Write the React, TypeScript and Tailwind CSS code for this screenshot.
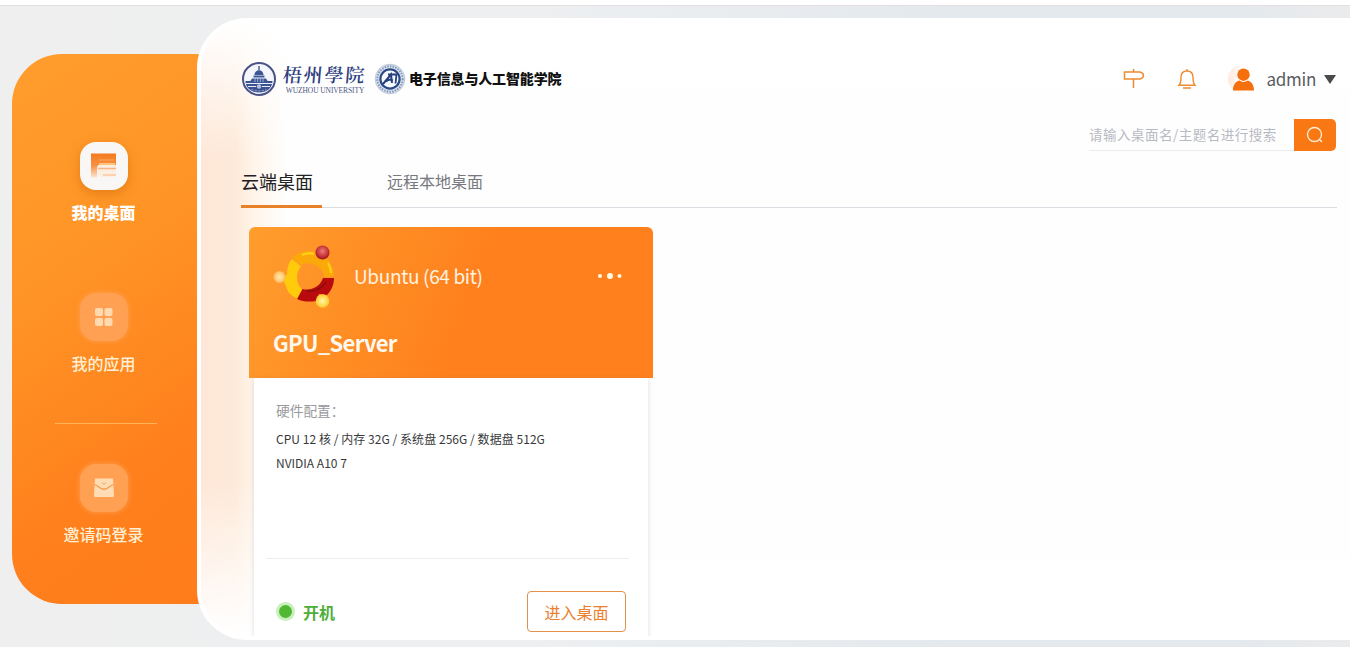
import { ReactNode } from 'react';

interface NavItemProps {
  label: string;
  icon: ReactNode;
  active?: boolean;
}

function NavItem({ label, icon, active = false }: NavItemProps) {
  return (
    <div className="flex flex-col items-center">
      <div
        className={`flex h-12 w-12 items-center justify-center rounded-2xl ${
          active
            ? 'bg-[#f8f7f6] shadow-[0_4px_12px_rgba(190,90,0,0.4)]'
            : 'bg-[#ffa052] shadow-[0_0_4px_1px_rgba(255,160,82,0.7)]'
        }`}
      >
        {icon}
      </div>
      <span
        className={`mt-2.5 mb-0.5 pr-px text-[16px] leading-6 ${
          active ? 'font-black text-white' : 'font-medium text-[#fff0d4]'
        }`}
      >
        {label}
      </span>
    </div>
  );
}

function DesktopIcon() {
  return (
    <svg className="ml-0.5" width="30" height="30" viewBox="0 0 30 30">
      <defs>
        <linearGradient id="desk" x1="0" y1="0" x2="0" y2="1">
          <stop offset="0" stopColor="#f47a1c" />
          <stop offset="0.5" stopColor="#f79044" />
          <stop offset="1" stopColor="#fde3d0" />
        </linearGradient>
      </defs>
      <path d="M1 2.500h25v13H7v11H1z" fill="url(#desk)" />
      <path d="M8 14h18v9c0 2-1 3-3 3H10l-3-4z" fill="#fdeee2" />
      <path d="M9 9h15" stroke="#f9a562" strokeWidth="1" />
      <path d="M9 13h16" stroke="#ffc47e" strokeWidth="2" />
      <path d="M8 17.500h18" stroke="#f9b482" strokeWidth="1.500" />
      <path d="M13 24h13" stroke="#fbc9a4" strokeWidth="1.500" />
    </svg>
  );
}

function AppsIcon() {
  return (
    <svg width="20" height="20" viewBox="0 0 20 20" fill="#ffd9b0">
      <rect x="1" y="1" width="8" height="8" rx="2" />
      <rect x="10.500" y="1" width="8" height="8" rx="2" />
      <rect x="1" y="11" width="8" height="8" rx="2" />
      <rect x="10.500" y="11" width="8" height="8" rx="2" />
    </svg>
  );
}

function InviteIcon() {
  return (
    <svg width="30" height="22" viewBox="0 0 30 22">
      <path d="M6 1.500h18l1 18.500H5z" fill="#ffddb4" />
      <path d="M6 7.500l7 4.500h4l7-4.500" fill="none" stroke="#f2a052" strokeWidth="1.300" />
      <path d="M13 5.500l2 2 2-2" fill="none" stroke="#f2a052" />
      <path d="M3 12l-3 4 3 4M27 12l3 4-3 4" fill="none" stroke="#f59a4c" />
    </svg>
  );
}

function UniversitySeal() {
  return (
    <svg width="36" height="36" viewBox="0 0 36 36">
      <circle cx="18" cy="18" r="16" fill="#f4f6fb" stroke="#4a5288" strokeWidth="2" />
      <path d="M4.500 20h27c0 7-6 11.500-13.500 11.500S4.500 27 4.500 20z" fill="#3c518f" />
      <path d="M17.300 5h1.400v4h-1.400zM13.500 14c0-6.500 9-6.500 9 0zM12.500 14.500h11v2h-11zM8 22l3-4.500h14l3 4.500z" fill="#3d5796" />
      <path d="M14 17v4M16.700 17v4M19.300 17v4M22 17v4" stroke="#c4cfe6" strokeWidth="0.700" />
      <path d="M5 22.500h26M7 25.500h8M21 25.500h8" stroke="#e8edf7" strokeWidth="1.100" />
      <circle cx="18" cy="25.500" r="2.200" fill="#b5c2df" />
      <path d="M10.500 28.500q7.500 3 15 0" fill="none" stroke="#a5b1d3" strokeDasharray="2 1.500" />
    </svg>
  );
}

function CollegeSeal() {
  return (
    <svg width="32" height="32" viewBox="0 0 32 32">
      <circle cx="16" cy="16" r="14.800" fill="#dbe3ef" stroke="#b3bfd3" strokeWidth="0.800" />
      <circle cx="16" cy="16" r="12.700" fill="none" stroke="#8294b8" strokeWidth="2" strokeDasharray="1.500 1.200" />
      <circle cx="16" cy="16" r="9.600" fill="#f7fafd" stroke="#2a4a85" strokeWidth="2.200" />
      <path d="M9 21l8-9.500 1 8.500M12 18.500c2-2 5-2 7-1" fill="none" stroke="#263f7d" strokeWidth="2" />
      <path d="M14 11.500h8.500l-1 9" fill="none" stroke="#263f7d" strokeWidth="1.800" />
    </svg>
  );
}

function UbuntuLogo() {
  return (
    <svg width="64" height="64" viewBox="0 0 64 64">
      <defs>
        <radialGradient id="red" cx="0.5" cy="0.4" r="0.6">
          <stop offset="0" stopColor="#f07c7c" />
          <stop offset="0.5" stopColor="#cf4346" />
          <stop offset="1" stopColor="#a3121a" />
        </radialGradient>
        <radialGradient id="yellow">
          <stop offset="0" stopColor="#fff9a8" />
          <stop offset="1" stopColor="#ffc928" />
        </radialGradient>
        <radialGradient id="peach">
          <stop offset="0" stopColor="#ffe7ac" />
          <stop offset="0.6" stopColor="#ffd183" />
          <stop offset="1" stopColor="#ffb55b" />
        </radialGradient>
      </defs>
      <path d="M24.500 54C19 51 14 47 13 41L10 35l4-6C14 23 16 17 19 14l9 7.500A17 17 0 0 0 29.500 45z" fill="#ffcb0b" />
      <path d="M19 13c6-6 14-8 22-7l3 6 8-1c5 5 9 12 9 20l-9 1A17 17 0 0 0 28 20z" fill="#fba90a" />
      <path d="M29 10q6-3 12-1M55 18q3 5 3 10" fill="none" stroke="#ffd21c" strokeWidth="2" />
      <path d="M61 33c0 7-3 13-7 17l-8-1-3 7c-6 1-13 1-19-2l5.500-10A17 17 0 0 0 50 33z" fill="#b90b0d" />
      <path d="M33 46q12 2 20-9" fill="none" stroke="#8f0c0c" strokeWidth="1.500" />
      <circle cx="49.500" cy="7.500" r="7" fill="url(#red)" />
      <circle cx="49.500" cy="56" r="6.800" fill="url(#yellow)" />
      <circle cx="6.500" cy="32" r="6" fill="url(#peach)" />
    </svg>
  );
}

function Header() {
  return (
    <header className="flex h-9 items-center justify-between">
      <div className="flex items-center">
        <UniversitySeal />
        <div className="ml-[6px] flex w-[84px] flex-col items-center">
          <span className="skew-x-[-5deg] font-['Noto_Serif_CJK_SC','Noto_Sans_CJK_TC',serif] text-[19px] leading-[22px] font-semibold tracking-[1.800px] whitespace-nowrap text-[#303f7e]">
            梧州學院
          </span>
          <span className="mt-px font-['Liberation_Serif',serif] text-[7.500px] leading-[9px] tracking-[-0.1px] whitespace-nowrap text-[#4d5681]">
            WUZHOU UNIVERSITY
          </span>
        </div>
        <div className="ml-[7px]">
          <CollegeSeal />
        </div>
        <span className="ml-[3px] pb-0.5 text-[14px] leading-5 font-black tracking-[-0.150px] text-[#111]">
          电子信息与人工智能学院
        </span>
      </div>
      <div className="flex items-center">
        <svg width="22" height="22" viewBox="0 0 22 22" fill="none" stroke="#ee8a32" strokeWidth="1.500">
          <path d="M1.500 4h15.500q3.500 1 3.500 3.500T17 11H1.500zM10.500 1v3M10.500 11v9" />
        </svg>
        <svg className="ml-[32px]" width="20" height="22" viewBox="0 0 20 22" fill="none" stroke="#ee8a32" strokeWidth="1.400">
          <path d="M2 17.300c1.500-1.500 2-3 2-8C4 5 6.500 3 10 3s6 2 6 6.300c0 5 .500 6.500 2 8zM10 1v2M6 20h8" />
        </svg>
        <div className="ml-[31px] flex h-7 w-7 items-center justify-center rounded-full bg-[linear-gradient(90deg,#ffe9dd,#fff_60%)]">
          <svg className="ml-1" width="23" height="23" viewBox="0 0 24 24" fill="#f5700c">
            <circle cx="12" cy="7" r="6.500" />
            <path d="M1 23.500c0-6 3-9.500 6.500-10.500q4.500 3 9 0c3.500 1 6.500 4.500 6.500 10.500z" />
          </svg>
        </div>
        <span className="ml-[11px] text-[17px] leading-6 tracking-[-0.3px] text-[#5a5b60]">admin</span>
        <svg className="ml-2" width="12" height="9" viewBox="0 0 12 9">
          <path d="M0 0h12L6 9z" fill="#4a4b4d" />
        </svg>
      </div>
    </header>
  );
}

function DesktopCard() {
  return (
    <div className="ml-2 w-[404px]">
      <div className="h-[151px] rounded-t-md bg-[linear-gradient(112deg,#ff9d2d_0%,#ff801d_55%,#ff801d_100%)] pt-[17px] pr-[30px] pl-6">
        <div className="flex h-[66px] items-center">
          <UbuntuLogo />
          <span className="mb-0.5 ml-[17px] text-[19px] leading-7 tracking-[-0.350px] text-[#fff3e2]">Ubuntu (64 bit)</span>
          <svg className="mb-[3px] ml-auto" width="26" height="8" viewBox="0 0 26 8" fill="#fffbe6">
            <circle cx="3" cy="4" r="2" />
            <circle cx="13" cy="4" r="3" />
            <circle cx="22.500" cy="4" r="2" />
          </svg>
        </div>
        <div className="mt-4 text-[22px] leading-8 font-bold tracking-[-0.700px] text-[#fff8ee]">GPU_Server</div>
      </div>
      <div className="mx-[5px] h-[262px] bg-white px-[22px] pt-[21px] shadow-[0_1px_5px_rgba(110,110,130,0.22)]">
        <p className="text-[13.700px] leading-[22px] text-[#999a9c]">硬件配置：</p>
        <p className="mt-[6px] text-[12px] leading-6 tracking-[0.050px] text-[#38393b]">
          CPU 12 核 / 内存 32G / 系统盘 256G / 数据盘 512G
        </p>
        <p className="text-[12px] leading-6 text-[#38393b]">NVIDIA A10 7</p>
        <div className="-mr-[3px] -ml-2.5 mt-[83px] border-t border-[#ededed]" />
        <div className="mt-8 flex items-center">
          <div className="flex h-[19px] w-[19px] items-center justify-center rounded-full bg-[#c9efbd]">
            <div className="h-[13px] w-[13px] rounded-full bg-[#52b732]" />
          </div>
          <span className="ml-2 text-[16px] leading-6 font-bold text-[#4fae39]">开机</span>
          <button className="ml-auto h-[41px] w-[99px] rounded border border-[#e3904a] text-[16px] text-[#e9802f]">
            进入桌面
          </button>
        </div>
      </div>
    </div>
  );
}

export default function App() {
  return (
    <div className="flex h-[647px] w-[1350px] flex-col overflow-hidden bg-white font-['Noto_Sans_CJK_SC',sans-serif]">
      <div className="h-[5px] shrink-0 bg-white" />
      <div className="flex h-[642px] border-t border-[#e5dfe1] bg-[linear-gradient(90deg,#efefef_0%,#edeff1_40%,#e4e9ed_70%,#e4e9ed_92%,#ebebec_100%)]">
        <aside className="mt-12 ml-3 flex h-[550px] w-[205px] shrink-0 flex-col rounded-l-[50px] rounded-r-[20px] bg-[linear-gradient(145deg,#ff9d2d_0%,#ff9526_35%,#ff801d_72%,#ff7c1b_100%)] pt-[88px] pr-[21px]">
          <NavItem label="我的桌面" icon={<DesktopIcon />} active />
          <div className="mt-[67px]">
            <NavItem label="我的应用" icon={<AppsIcon />} />
          </div>
          <div className="mt-[46px] ml-[43px] w-[102px] border-t border-[#ffb457]" />
          <div className="mt-10">
            <NavItem label="邀请码登录" icon={<InviteIcon />} />
          </div>
        </aside>

        <main className="relative z-10 mt-3 -ml-5 h-[622px] w-[1153px] overflow-hidden rounded-l-[50px] border-y-4 border-l-4 border-white bg-[linear-gradient(180deg,#fff_0%,#fff0_22%,#fff0_75%,#fff_100%),linear-gradient(90deg,#ffe7d8_0px,#fdead9_35px,#fff4e9_52px,#fefefe_85px)] pr-[14px] pl-10">
          <div className="mt-[39px]">
            <Header />
          </div>
          <div className="mt-[22px] flex h-8 justify-end">
            <input
              className="w-[205px] border-b border-[#ececef] bg-transparent text-[13.500px] tracking-[0.500px] text-[#555] outline-none placeholder:text-[#b8bac2]"
              placeholder="请输入桌面名/主题名进行搜索"
            />
            <button className="flex w-[42px] items-center justify-center rounded-r-[5px] bg-[#fa7814]">
              <svg width="18" height="18" viewBox="0 0 18 18" fill="none" stroke="#fff0d8" strokeWidth="1.300">
                <circle cx="8.500" cy="8.500" r="7" />
                <path d="M13.500 13.500l2.500 2.500" />
              </svg>
            </button>
          </div>
          <nav className="mt-4 -mr-px flex h-[41px] border-b border-[#dcdbe2]">
            <div className="h-[41px] w-[81px] border-b-[3px] border-[#e98128] text-[18px] leading-7 text-[#222]">云端桌面</div>
            <div className="ml-[65px] text-[16px] leading-7 text-[#777980]">远程本地桌面</div>
          </nav>
          <div className="mt-[19px]">
            <DesktopCard />
          </div>
        </main>
      </div>
    </div>
  );
}
